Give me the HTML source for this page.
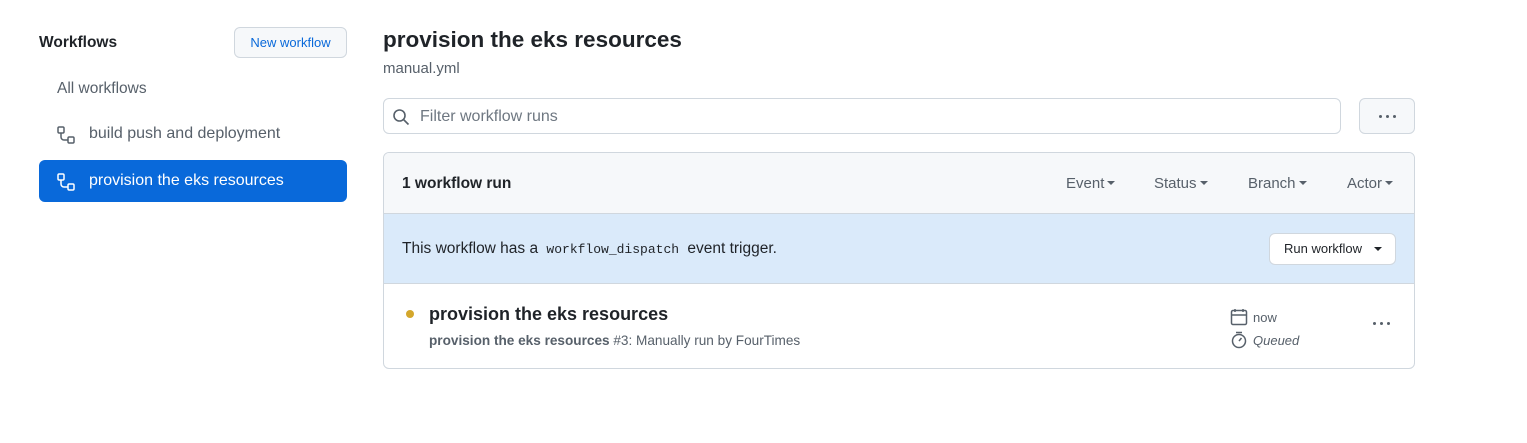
<!DOCTYPE html>
<html><head><style>
*{box-sizing:border-box;margin:0;padding:0}
body{width:1527px;height:443px;background:#fff;font-family:"Liberation Sans",sans-serif;color:#1f2328;position:relative;overflow:hidden}
.abs{position:absolute}
.btn{position:absolute;border:1px solid #d0d7de;border-radius:6px;background:#f6f8fa}
svg{display:block}
.dots{position:absolute;display:flex;gap:4px}
.dots i{width:3px;height:3px;border-radius:50%;background:#57606a;display:block}
.car{display:inline-block;width:0;height:0;border-left:4px solid transparent;border-right:4px solid transparent;border-top:4px solid #57606a;vertical-align:middle;margin-left:3px;margin-top:-2px}
</style></head><body>
<div class="abs" style="left:39px;top:34px;font-size:15.5px;font-weight:bold">Workflows</div>
<div class="btn" style="left:234px;top:27px;width:113px;height:31px;color:#0969da;font-size:13px;text-align:center;line-height:29px">New workflow</div>
<div class="abs" style="left:57px;top:80px;font-size:15.5px;color:#57606a">All workflows</div>
<svg class="abs" style="left:57px;top:126px" width="18" height="18" viewBox="0 0 18 18" fill="none" stroke="#57606a" stroke-width="1.5"><rect x="1" y="1" width="6" height="6" rx="1.2"/><rect x="11" y="11" width="6" height="6" rx="1.2"/><path d="M4 7v4a3 3 0 0 0 3 3h4"/></svg>
<div class="abs" style="left:89px;top:125px;font-size:16px;color:#57606a">build push and deployment</div>
<div class="abs" style="left:39px;top:160px;width:308px;height:42px;background:#0969da;border-radius:6px"></div>
<svg class="abs" style="left:57px;top:173px" width="18" height="18" viewBox="0 0 18 18" fill="none" stroke="#fff" stroke-width="1.5"><rect x="1" y="1" width="6" height="6" rx="1.2"/><rect x="11" y="11" width="6" height="6" rx="1.2"/><path d="M4 7v4a3 3 0 0 0 3 3h4"/></svg>
<div class="abs" style="left:89px;top:172px;font-size:16px;color:#fff">provision the eks resources</div>

<div class="abs" style="left:383px;top:27px;font-size:22.5px;font-weight:bold">provision the eks resources</div>
<div class="abs" style="left:383px;top:60px;font-size:15px;color:#57606a">manual.yml</div>
<div class="abs" style="left:383px;top:98px;width:958px;height:36px;border:1px solid #d0d7de;border-radius:6px"></div>
<svg class="abs" style="left:392px;top:108px" width="18" height="18" viewBox="0 0 18 18" fill="none" stroke="#57606a" stroke-width="1.6"><circle cx="7.5" cy="7.5" r="5.5"/><path d="M11.5 11.5l5 5"/></svg>
<div class="abs" style="left:420px;top:108px;font-size:16px;color:#6e7781">Filter workflow runs</div>
<div class="btn" style="left:1359px;top:98px;width:56px;height:36px"></div>
<div class="dots" style="left:1379px;top:115px"><i></i><i></i><i></i></div>

<div class="abs" style="left:383px;top:152px;width:1032px;height:217px;border:1px solid #d0d7de;border-radius:6px;overflow:hidden">
 <div style="height:61px;background:#f6f8fa;border-bottom:1px solid #d0d7de;position:relative">
  <div class="abs" style="left:18px;top:22px;font-size:15.5px;font-weight:bold">1 workflow run</div>
  <div class="abs" style="left:682px;top:22px;font-size:15px;color:#57606a">Event<span class="car"></span></div>
  <div class="abs" style="left:770px;top:22px;font-size:15px;color:#57606a">Status<span class="car"></span></div>
  <div class="abs" style="left:864px;top:22px;font-size:15px;color:#57606a">Branch<span class="car"></span></div>
  <div class="abs" style="left:963px;top:22px;font-size:15px;color:#57606a">Actor<span class="car"></span></div>
 </div>
 <div style="height:70px;background:#daeafa;border-bottom:1px solid #d0d7de;position:relative">
  <div class="abs" style="left:18px;top:26px;font-size:15.5px">This workflow has a <span style="font-family:'Liberation Mono',monospace;font-size:13px;padding:2px 4px;border-radius:4px">workflow_dispatch</span> event trigger.</div>
  <div class="btn" style="left:885px;top:19px;width:127px;height:32px;font-size:13px;line-height:30px;padding-left:14px;background:#fff">Run workflow <span class="car" style="margin-left:8px;border-top-color:#1f2328"></span></div>
 </div>
 <div style="position:relative;height:84px">
  <div class="abs" style="left:22px;top:26px;width:8px;height:8px;border-radius:50%;background:#d4a72c"></div>
  <div class="abs" style="left:45px;top:20px;font-size:18px;font-weight:bold">provision the eks resources</div>
  <div class="abs" style="left:45px;top:49px;font-size:13.6px;color:#57606a"><b>provision the eks resources</b> #3: Manually run by FourTimes</div>
  <svg class="abs" style="left:846px;top:24px" width="18" height="18" viewBox="0 0 18 18" fill="none" stroke="#57606a" stroke-width="1.5"><rect x="1.5" y="2.5" width="15" height="14" rx="1.5"/><path d="M1.5 7h15M5 1v3M13 1v3"/></svg>
  <div class="abs" style="left:869px;top:26px;font-size:13px;color:#57606a">now</div>
  <svg class="abs" style="left:846px;top:47px" width="18" height="18" viewBox="0 0 18 18" fill="none" stroke="#57606a" stroke-width="1.5"><circle cx="9" cy="10" r="6.5"/><path d="M6 1.5h6M9 10l2.5-3"/></svg>
  <div class="abs" style="left:869px;top:49px;font-size:13px;color:#57606a;font-style:italic">Queued</div>
  <div class="dots" style="left:989px;top:38px"><i></i><i></i><i></i></div>
 </div>
</div>
</body></html>
